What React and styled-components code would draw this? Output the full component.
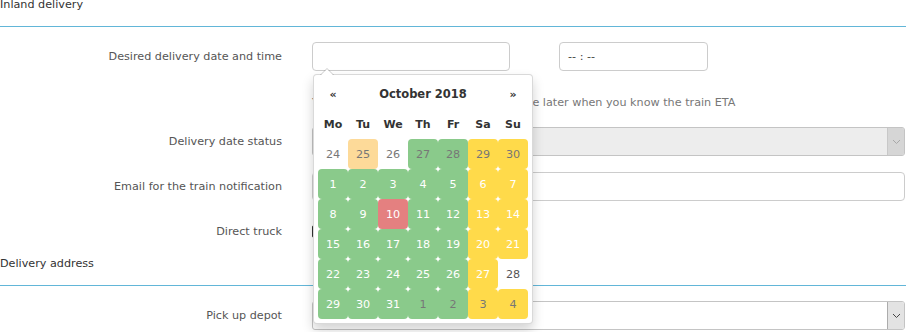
import React from 'react';
import styled, { createGlobalStyle } from 'styled-components';

const GlobalStyle = createGlobalStyle`
  html, body {
    margin: 0;
    padding: 0;
    background: #fff;
  }
  body {
    font-family: 'DejaVu Sans', Verdana, sans-serif;
    font-size: 11.2px;
    color: #333;
    overflow: hidden;
  }
`;

const Page = styled.div`
  width: 906px;
  height: 332px;
  overflow: hidden;
`;

const SectionTitle = styled.div`
  line-height: 10px;
  color: #333;
  padding-bottom: 16px;
  border-bottom: 1px solid #62b6d8;
  margin-top: ${(p) => p.$top || 0}px;
`;

const SectionBody = styled.div`
  padding: 15px 1px 0 0;
`;

const FormRow = styled.div`
  display: grid;
  grid-template-columns: 282px 1fr;
  column-gap: 30px;
  align-items: start;
  margin-bottom: ${(p) => (p.$gap !== undefined ? p.$gap : 16)}px;
`;

const Label = styled.div`
  text-align: right;
  line-height: 29px;
  color: #555;
`;

const DateTimeGroup = styled.div`
  display: flex;
  flex-direction: column;
`;

const InputsLine = styled.div`
  display: flex;
  gap: 49px;
`;

const TextBox = styled.div`
  box-sizing: border-box;
  height: 29px;
  width: ${(p) => p.$width || '100%'};
  border: 1px solid #ccc;
  border-radius: 4px;
  background: #fff;
  padding: 0 8px;
  line-height: 27px;
  color: #444;
  position: relative;
`;

const Help = styled.div`
  margin-top: 23px;
  line-height: 17px;
  color: #777;
  white-space: nowrap;
`;

const SelectBox = styled.div`
  box-sizing: border-box;
  height: 29px;
  border: 1px solid #c4c4c4;
  border-radius: 3px;
  background: ${(p) => (p.$disabled ? '#ededed' : '#fff')};
  display: flex;
  align-items: stretch;
  overflow: hidden;
`;

const SelectValue = styled.div`
  flex: 1;
  padding: 0 6px;
  line-height: 27px;
  color: #333;
  white-space: nowrap;
`;

const SelectArrow = styled.div`
  width: 16px;
  display: flex;
  align-items: center;
  justify-content: center;
  background: ${(p) => (p.$disabled ? '#d6d6d6' : '#e3e3e3')};
  border-left: 1px solid ${(p) => (p.$disabled ? '#c8c8c8' : '#acacac')};
  color: ${(p) => (p.$disabled ? '#a8a8a8' : '#444')};
`;

const Check = styled.span`
  display: block;
  width: 13px;
  height: 13px;
  box-sizing: border-box;
  border: 1px solid #333;
  border-radius: 2px;
  margin-top: 8px;
  background: #fff;
`;

const Popup = styled.div`
  position: absolute;
  left: 0;
  top: calc(100% + 4px);
  z-index: 10;
  box-sizing: border-box;
  width: 220px;
  padding: 4px;
  background: #fff;
  border: 1px solid rgba(0, 0, 0, 0.15);
  border-radius: 4px;
  box-shadow: 0 6px 12px rgba(0, 0, 0, 0.175);
  line-height: normal;

  &:before {
    content: '';
    position: absolute;
    top: -7px;
    left: 6px;
    border-left: 7px solid transparent;
    border-right: 7px solid transparent;
    border-bottom: 7px solid rgba(0, 0, 0, 0.2);
  }
  &:after {
    content: '';
    position: absolute;
    top: -6px;
    left: 7px;
    border-left: 6px solid transparent;
    border-right: 6px solid transparent;
    border-bottom: 6px solid #fff;
  }
`;

const CalGrid = styled.div`
  display: grid;
  grid-template-columns: repeat(7, 30px);
  grid-auto-rows: 30px;
`;

const HeadCell = styled.div`
  display: flex;
  align-items: center;
  justify-content: center;
  font-weight: bold;
  font-size: ${(p) => (p.$title ? '11.5px' : '11px')};
  color: #333;
  grid-column: ${(p) => p.$span || 'auto'};
`;

const toneBg = {
  green: '#8aca8b',
  yellow: '#ffda4a',
  light: '#fdda99',
  red: '#e48080',
  none: 'transparent',
};

const DayCell = styled.div`
  display: flex;
  align-items: center;
  justify-content: center;
  font-size: 11.2px;
  border-radius: 4px;
  background: ${(p) => toneBg[p.$tone]};
  color: ${(p) =>
    p.$other ? '#777' : p.$tone === 'none' ? '#555' : '#fff'};
`;

const Chevron = () => (
  <svg width="9" height="6" viewBox="0 0 9 6">
    <path d="M1 1 L4.5 4.5 L8 1" fill="none" stroke="currentColor" strokeWidth="1" />
  </svg>
);

const G = 'green';
const Y = 'yellow';
const weeks = [
  [[24, 'none', 1], [25, 'light', 1], [26, 'none', 1], [27, G, 1], [28, G, 1], [29, Y, 1], [30, Y, 1]],
  [[1, G], [2, G], [3, G], [4, G], [5, G], [6, Y], [7, Y]],
  [[8, G], [9, G], [10, 'red'], [11, G], [12, G], [13, Y], [14, Y]],
  [[15, G], [16, G], [17, G], [18, G], [19, G], [20, Y], [21, Y]],
  [[22, G], [23, G], [24, G], [25, G], [26, G], [27, Y], [28, 'none']],
  [[29, G], [30, G], [31, G], [1, G, 1], [2, G, 1], [3, Y, 1], [4, Y, 1]],
];

const Calendar = () => (
  <Popup>
    <CalGrid>
      <HeadCell>«</HeadCell>
      <HeadCell $span="span 5" $title>October 2018</HeadCell>
      <HeadCell>»</HeadCell>
      {['Mo', 'Tu', 'We', 'Th', 'Fr', 'Sa', 'Su'].map((d) => (
        <HeadCell key={d}>{d}</HeadCell>
      ))}
      {weeks.flat().map(([d, tone, other], i) => (
        <DayCell key={i} $tone={tone} $other={!!other}>
          {d}
        </DayCell>
      ))}
    </CalGrid>
  </Popup>
);

export default function App() {
  return (
    <Page>
      <GlobalStyle />
      <SectionTitle>Inland delivery</SectionTitle>
      <SectionBody>
        <FormRow $gap={16}>
          <Label>Desired delivery date and time</Label>
          <DateTimeGroup>
            <InputsLine>
              <TextBox $width="198px">
                <Calendar />
              </TextBox>
              <TextBox $width="149px">-- : --</TextBox>
            </InputsLine>
            <Help>You can always choose the delivery date later when you know the train ETA</Help>
          </DateTimeGroup>
        </FormRow>
        <FormRow>
          <Label>Delivery date status</Label>
          <SelectBox $disabled>
            <SelectValue />
            <SelectArrow $disabled>
              <Chevron />
            </SelectArrow>
          </SelectBox>
        </FormRow>
        <FormRow>
          <Label>Email for the train notification</Label>
          <TextBox />
        </FormRow>
        <FormRow $gap={0}>
          <Label>Direct truck</Label>
          <Check />
        </FormRow>
      </SectionBody>
      <SectionTitle $top={13}>Delivery address</SectionTitle>
      <SectionBody>
        <FormRow>
          <Label>Pick up depot</Label>
          <SelectBox>
            <SelectValue>Select your depot</SelectValue>
            <SelectArrow>
              <Chevron />
            </SelectArrow>
          </SelectBox>
        </FormRow>
      </SectionBody>
    </Page>
  );
}
